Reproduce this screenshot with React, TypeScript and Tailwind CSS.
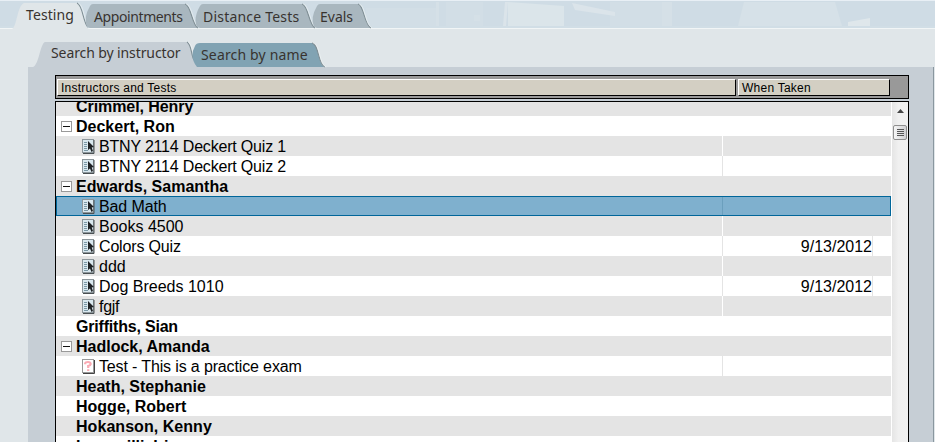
const UI_FONT = "font-['Noto_Sans','Open_Sans',sans-serif]";

type TabProps = {
  label: string;
  fill: string;
  shape: string;
  edge: string;
  box: string;
  text: string;
};

function Tab({ label, fill, shape, edge, box, text }: TabProps) {
  return (
    <div className={`relative shrink-0 ${box}`}>
      <svg className="absolute inset-0 h-full w-full overflow-visible" fill="none">
        <path d={shape} fill={fill} />
        <path d={edge} stroke="#7f8e94" strokeWidth="1.1" />
        <path d={edge} stroke="#f2f6f7" strokeWidth="0.6" transform="translate(1.2 0)" />
      </svg>
      <span className={`relative block whitespace-nowrap text-[14px] leading-[20px] text-[#38332f] ${text}`}>{label}</span>
    </div>
  );
}

function TopTabs() {
  const c = "#a9b7bf";
  return (
    <div className="relative flex h-[28px] items-end pl-[12px]">
      <Tab label="Testing" fill="#e0e6e9" box="h-[25px] w-[74px]" text="pl-[14px] pt-[2px] tracking-[0.1px]"
        shape="M0 26C5 24 5 3 12 0H65C71 2 71 23 77 26Z" edge="M65 0C71 2 71 20 76 24" />
      <Tab label="Appointments" fill={c} box="h-[24px] w-[110px]" text="pl-[8px] pt-[3px] tracking-[-0.4px]"
        shape="M1 23Q-3 14 4 2Q5 0 7 0H99C105 1 106 21 112 24H4Z" edge="M99 0C105 1 106 21 112 24" />
      <Tab label="Distance Tests" fill={c} box="h-[24px] w-[117px]" text="pl-[7px] pt-[3px] tracking-[0.2px]"
        shape="M1 23Q-3 14 4 2Q5 0 7 0H106C112 1 113 21 119 24H4Z" edge="M106 0C112 1 113 21 119 24" />
      <Tab label="Evals" fill={c} box="h-[24px] w-[60px]" text="pl-[7px] pt-[3px]"
        shape="M1 23Q-3 14 4 2Q5 0 7 0H45C51 1 51 21 58 24H4Z" edge="M45 0C51 1 51 21 58 24" />
    </div>
  );
}

function SubTabs() {
  return (
    <div className="flex h-[38px] items-end pl-[33px]">
      <Tab label="Search by instructor" fill="#c6ced5" box="h-[25px] w-[157px]" text="pl-[18px] pt-[1px] tracking-[-0.1px]"
        shape="M0 25C6 23 7 2 12 0H154C159 3 160 20 165 25Z" edge="M154 0C159 3 158 14 161 18" />
      <Tab label="Search by name" fill="#81a3b3" box="h-[24px] w-[140px]" text="pl-[11px] pt-[2px] tracking-[0.16px]"
        shape="M7 24Q-1 14 5 3Q6 0 10 0H122C129 1 128 22 135 24Z" edge="M122 0C129 1 128 22 135 24" />
    </div>
  );
}

function Scenery() {
  return (
    <svg className="absolute inset-0 h-[28px] w-[935px]" fill="none">
      <rect width="935" height="28" fill="#cfdce5" />
      <path d="M366 8h70v18h-70zM446 2h37v24h-37zM610 2h60v24h-60z" fill="#d2dee6" />
      <path d="M508 2 564 6V26H508Z" fill="#dbe5ea" />
      <path d="M572 3 615 12V16L575 10ZM505 2h3l-2 24h-3z" fill="#dbe4ea" />
      <path d="M436 2h3v24h-3zM474 15h6v6h-6zM662 2h10v24h-10z" fill="#d5e0e7" />
      <path d="M744 2H835L842 26H738Z" fill="#d6e1e8" />
      <path d="M848 22 870 18V26H848Z" fill="#dfe7eb" />
      <rect width="935" height="1" fill="#e8eff5" />
      <rect y="26" width="935" height="2" fill="#d1dee6" />
    </svg>
  );
}

function Collapse() {
  return (
    <svg className="h-[11px] w-[11px] shrink-0" viewBox="0 0 11 11" shapeRendering="crispEdges" fill="none">
      <rect x=".5" y=".5" width="10" height="10" fill="#fff" stroke="#999" />
      <path d="M2 5.5h7" stroke="#111" />
    </svg>
  );
}

function TestIcon() {
  return (
    <svg className="h-[15px] w-[13px] shrink-0" viewBox="0 0 13 15" fill="none">
      <rect x=".5" y=".5" width="11" height="13" fill="#d9e8ef" stroke="#8d979c" />
      <path d="M12 1v13.5H1" stroke="#4a5053" />
      <path d="M2 3.5h3M2 5.5h3M2 7.5h3M2 9.5h3M2 11.5h4" stroke="#7b98a6" />
      <path d="M6 2V11L8 9.5 9.5 13 11 12 9.7 8.5 12 8Z" fill="#202326" />
    </svg>
  );
}

function PracticeIcon() {
  return (
    <svg className="h-[15px] w-[13px] shrink-0" viewBox="0 0 13 15" fill="none">
      <rect x=".5" y=".5" width="11" height="13" fill="#fff" stroke="#999" />
      <path d="M12.5 1v13.5H1" stroke="#444" />
      <path d="M3.2 5.2V4Q3.5 3 6 3T8.7 5Q8.5 6.5 6.2 7V9M6.2 10.2V12" stroke="#fbaab3" strokeWidth="2.2" />
    </svg>
  );
}

type Item = { name: string; kind: "group" | "leaf" | "test" | "practice"; date?: string; selected?: boolean; tracking?: string };

const ITEMS: Item[] = [
  { name: "Crimmel, Henry", kind: "leaf", tracking: "tracking-[-0.07px]" },
  { name: "Deckert, Ron", kind: "group" },
  { name: "BTNY 2114 Deckert Quiz 1", kind: "test", tracking: "tracking-[-0.19px]" },
  { name: "BTNY 2114 Deckert Quiz 2", kind: "test", tracking: "tracking-[-0.19px]" },
  { name: "Edwards, Samantha", kind: "group" },
  { name: "Bad Math", kind: "test", selected: true, tracking: "tracking-[-0.12px]" },
  { name: "Books 4500", kind: "test" },
  { name: "Colors Quiz", kind: "test", date: "9/13/2012", tracking: "tracking-[-0.17px]" },
  { name: "ddd", kind: "test" },
  { name: "Dog Breeds 1010", kind: "test", date: "9/13/2012" },
  { name: "fgjf", kind: "test", tracking: "tracking-[-0.3px]" },
  { name: "Griffiths, Sian", kind: "leaf", tracking: "tracking-[-0.2px]" },
  { name: "Hadlock, Amanda", kind: "group" },
  { name: "Test - This is a practice exam", kind: "practice", tracking: "tracking-[-0.14px]" },
  { name: "Heath, Stephanie", kind: "leaf" },
  { name: "Hogge, Robert", kind: "leaf" },
  { name: "Hokanson, Kenny", kind: "leaf", tracking: "tracking-[0.05px]" },
  { name: "Iagnavilli, Irie", kind: "leaf" },
];

function Row({ item, odd }: { item: Item; odd: boolean }) {
  const person = item.kind === "group" || item.kind === "leaf";
  const bg = item.selected ? "bg-[#7fb0ce] outline outline-1 -outline-offset-1 outline-[#00669a]" : odd ? "bg-white" : "bg-[#e4e4e4]";
  const line = item.selected ? "border-[#6b9fbd]" : odd ? "border-[#e4e4e4]" : "border-white";
  return (
    <div className={`flex h-[20px] shrink-0 text-[16px] leading-[22px] text-black ${bg}`}>
      {person ? (
        <div className="flex pl-[5px] font-bold">
          <span className="flex w-[15px] pt-[5px]">{item.kind === "group" && <Collapse />}</span>
          <span className={`whitespace-nowrap ${item.tracking ?? ""}`}>{item.name}</span>
        </div>
      ) : (
        <>
          <div className={`flex w-[667px] gap-[4px] border-r pl-[26px] ${line}`}>
            <span className="flex pt-[3px]">{item.kind === "test" ? <TestIcon /> : <PracticeIcon />}</span>
            <span className={`whitespace-nowrap ${item.tracking ?? ""}`}>{item.name}</span>
          </div>
          {item.date && <div className={`w-[150px] border-r text-right ${line}`}>{item.date}</div>}
        </>
      )}
    </div>
  );
}

function Scrollbar() {
  return (
    <div className="flex w-[17px] flex-col items-center border-l border-white bg-[linear-gradient(to_right,#e5e5e5,#f0f0f0_40%,#f1f1f1)]">
      <svg className="mt-[7px] h-[4px] w-[7px]" viewBox="0 0 7 4"><path d="M3.5 0 7 4H0Z" fill="#444" /></svg>
      <div className="mt-[12px] flex h-[15px] w-[14px] flex-col items-center justify-center gap-[1px] rounded-[2px] border border-[#8f8f8f] bg-[linear-gradient(to_right,#f6f6f6,#d0d0d2)]">
        <i className="h-px w-[7px] bg-[#555]" />
        <i className="h-px w-[7px] bg-[#555]" />
        <i className="h-px w-[7px] bg-[#555]" />
        <i className="h-px w-[7px] bg-[#555]" />
      </div>
    </div>
  );
}

function HeaderCell({ label, size }: { label: string; size: string }) {
  return (
    <div className={`h-[17px] border border-t-white border-r-black border-b-black border-l-white bg-[#d3cfc3] pl-[3px] text-[12px] leading-[16px] tracking-[0.24px] text-black ${size}`}>
      {label}
    </div>
  );
}

export default function App() {
  return (
    <div className="flex h-[442px] w-[935px] flex-col overflow-hidden bg-[#e0e6e9] font-['Liberation_Sans',Arial,sans-serif]">
      <header className={`relative ${UI_FONT}`}>
        <Scenery />
        <TopTabs />
      </header>
      <div className={`border-t border-[#f1f5f6] ${UI_FONT}`}>
        <SubTabs />
      </div>
      <main className="ml-[28px] flex min-h-0 w-[906px] flex-1 flex-col border-r border-[#8a979f] bg-[#c6ced5] pl-[27px] pt-[8px]">
        <div className="flex h-[24px] w-[854px] shrink-0 gap-[2px] border border-black bg-[#999] pl-[1px] pt-[3px]">
          <HeaderCell label="Instructors and Tests" size="w-[679px]" />
          <HeaderCell label="When Taken" size="w-[152px]" />
        </div>
        <div className="mt-[2px] flex min-h-0 w-[854px] flex-1 overflow-hidden border border-b-0 border-black">
          <div className="-mt-[6px] flex w-[835px] flex-col">
            {ITEMS.map((item, i) => <Row key={item.name} item={item} odd={i % 2 === 1} />)}
          </div>
          <Scrollbar />
        </div>
      </main>
    </div>
  );
}
